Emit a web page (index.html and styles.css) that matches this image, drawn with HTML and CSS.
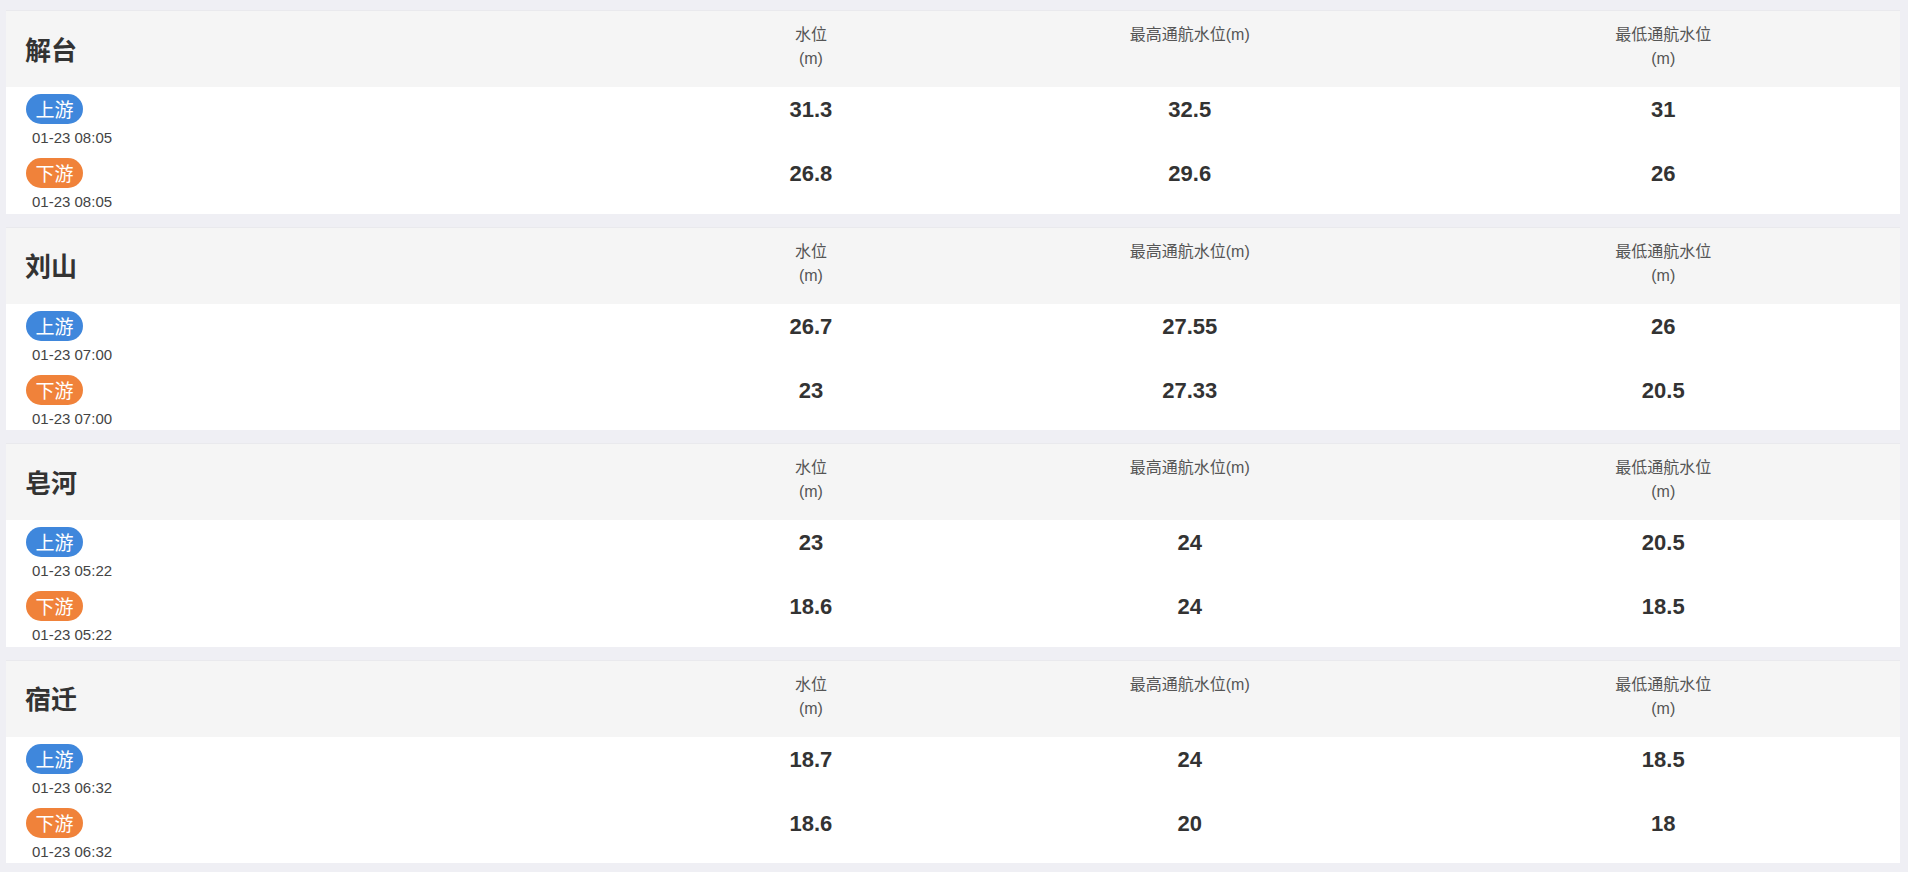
FILE: index.html
```html
<!DOCTYPE html>
<html lang="zh-CN">
<head>
<meta charset="utf-8">
<title>水位</title>
<link rel="stylesheet" href="styles.css">
</head>
<body>
<div class="page">
  <section class="card">
    <div class="card-head">
      <div class="station">解台</div>
      <div class="col-title"><span class="ln">水位</span><span class="ln">(m)</span></div>
      <div class="col-title"><span class="ln">最高通航水位(m)</span></div>
      <div class="col-title"><span class="ln">最低通航水位</span><span class="ln">(m)</span></div>
    </div>
    <div class="card-body">
      <div class="row">
        <div class="gate"><span class="badge up">上游</span><span class="time">01-23 08:05</span></div>
        <div class="val">31.3</div><div class="val">32.5</div><div class="val">31</div>
      </div>
      <div class="row">
        <div class="gate"><span class="badge down">下游</span><span class="time">01-23 08:05</span></div>
        <div class="val">26.8</div><div class="val">29.6</div><div class="val">26</div>
      </div>
    </div>
  </section>

  <section class="card">
    <div class="card-head">
      <div class="station">刘山</div>
      <div class="col-title"><span class="ln">水位</span><span class="ln">(m)</span></div>
      <div class="col-title"><span class="ln">最高通航水位(m)</span></div>
      <div class="col-title"><span class="ln">最低通航水位</span><span class="ln">(m)</span></div>
    </div>
    <div class="card-body">
      <div class="row">
        <div class="gate"><span class="badge up">上游</span><span class="time">01-23 07:00</span></div>
        <div class="val">26.7</div><div class="val">27.55</div><div class="val">26</div>
      </div>
      <div class="row">
        <div class="gate"><span class="badge down">下游</span><span class="time">01-23 07:00</span></div>
        <div class="val">23</div><div class="val">27.33</div><div class="val">20.5</div>
      </div>
    </div>
  </section>

  <section class="card">
    <div class="card-head">
      <div class="station">皂河</div>
      <div class="col-title"><span class="ln">水位</span><span class="ln">(m)</span></div>
      <div class="col-title"><span class="ln">最高通航水位(m)</span></div>
      <div class="col-title"><span class="ln">最低通航水位</span><span class="ln">(m)</span></div>
    </div>
    <div class="card-body">
      <div class="row">
        <div class="gate"><span class="badge up">上游</span><span class="time">01-23 05:22</span></div>
        <div class="val">23</div><div class="val">24</div><div class="val">20.5</div>
      </div>
      <div class="row">
        <div class="gate"><span class="badge down">下游</span><span class="time">01-23 05:22</span></div>
        <div class="val">18.6</div><div class="val">24</div><div class="val">18.5</div>
      </div>
    </div>
  </section>

  <section class="card">
    <div class="card-head">
      <div class="station">宿迁</div>
      <div class="col-title"><span class="ln">水位</span><span class="ln">(m)</span></div>
      <div class="col-title"><span class="ln">最高通航水位(m)</span></div>
      <div class="col-title"><span class="ln">最低通航水位</span><span class="ln">(m)</span></div>
    </div>
    <div class="card-body">
      <div class="row">
        <div class="gate"><span class="badge up">上游</span><span class="time">01-23 06:32</span></div>
        <div class="val">18.7</div><div class="val">24</div><div class="val">18.5</div>
      </div>
      <div class="row">
        <div class="gate"><span class="badge down">下游</span><span class="time">01-23 06:32</span></div>
        <div class="val">18.6</div><div class="val">20</div><div class="val">18</div>
      </div>
    </div>
  </section>
</div>
</body>
</html>
```
FILE: styles.css
```css
html, body {
  margin: 0;
  padding: 0;
  background: #efeff4;
}
body {
  font-family: "Liberation Sans", "Noto Sans CJK SC", sans-serif;
  color: #333;
}
.page {
  padding: 10px 8px 0 6px;
}
.card {
  background: #fff;
  margin-bottom: 13px;
}
.card-head,
.row {
  display: grid;
  grid-template-columns: 35% 15% 25% 25%;
}
.card-head {
  height: 77px;
  background: #f5f5f5;
  box-shadow: inset 0 1px 0 #e9e9ed;
}
.station {
  align-self: center;
  padding-left: 19px;
  font-family: "Noto Sans CJK SC", sans-serif;
  font-size: 26px;
  font-weight: bold;
  color: #333;
  line-height: 32px;
}
.col-title {
  display: flex;
  flex-direction: column;
  align-items: center;
  padding-top: 13px;
  font-size: 16px;
  line-height: 24px;
  color: #555;
}
.card-body {
  display: flex;
  flex-direction: column;
  gap: 10px;
  padding: 7px 0 1.5px;
}
.gate {
  display: flex;
  flex-direction: column;
  align-items: flex-start;
  padding-left: 20px;
}
.badge {
  display: block;
  height: 30px;
  line-height: 30px;
  padding: 0 9.5px;
  border-radius: 15px;
  font-family: "Noto Sans CJK SC", sans-serif;
  font-size: 19px;
  color: #fff;
}
.badge.up {
  background: #3f87dc;
}
.badge.down {
  background: #f0823a;
}
.time {
  display: block;
  margin-top: 4px;
  margin-left: 6px;
  font-size: 15px;
  line-height: 20px;
  color: #444;
}
.val {
  align-self: start;
  padding-top: 1px;
  text-align: center;
  font-size: 22px;
  font-weight: bold;
  line-height: 30px;
  color: #333;
}
```
